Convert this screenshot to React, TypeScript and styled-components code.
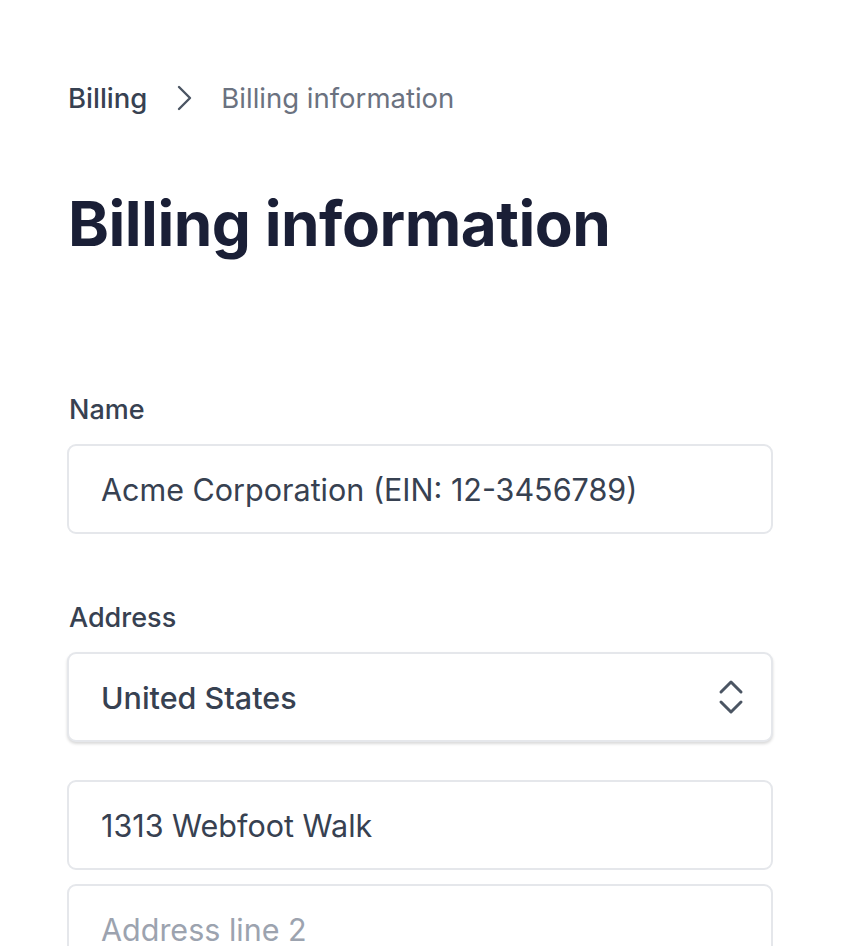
import React from "react";
import styled, { createGlobalStyle } from "styled-components";

const Global = createGlobalStyle`
  html, body { margin: 0; padding: 0; background: #ffffff; }
  body { font-family: Inter, "Noto Sans", sans-serif; -webkit-font-smoothing: antialiased; }
  * { box-sizing: border-box; }
`;

const Page = styled.main`
  padding: 80px 95px 0 67px;
  display: flex;
  flex-direction: column;
`;

const Breadcrumbs = styled.nav`
  display: flex;
  align-items: center;
  gap: 29px;
  font-size: 27.5px;
  line-height: 36px;
  padding-left: 1px;
`;

const Crumb = styled.span<{ $current?: boolean }>`
  color: ${(p) => (p.$current ? "#6b7280" : "#374151")};
  font-weight: ${(p) => (p.$current ? 400 : 500)};
`;

const Chevron = styled.svg`
  width: 16px;
  height: 26px;
  color: #4b5563;
`;

const Title = styled.h1`
  margin: 68px 0 0 1px;
  font-size: 62px;
  line-height: 80px;
  font-weight: 700;
  color: #1a1f36;
  letter-spacing: -0.5px;
`;

const Form = styled.form`
  margin-top: 130px;
  display: flex;
  flex-direction: column;
`;

const Field = styled.div<{ $gap?: number }>`
  display: flex;
  flex-direction: column;
  margin-bottom: ${(p) => p.$gap ?? 0}px;
`;

const Label = styled.label`
  font-size: 27px;
  line-height: 32px;
  color: #374151;
  font-weight: 500;
  margin: 0 0 18px 2px;
`;

const Input = styled.input`
  width: 100%;
  height: 90px;
  border: 2px solid #e5e7eb;
  border-radius: 9px;
  padding: 0 32px;
  font-family: inherit;
  font-size: 30.5px;
  color: #374151;
  background: #fff;
  outline: none;
  &::placeholder { color: #9ca3af; }
`;

const InputStack = styled.div`
  display: flex;
  flex-direction: column;
  gap: 14px;
  margin-top: 38px;
`;

const SelectBox = styled.div`
  height: 90px;
  border: 2px solid #e5e7eb;
  border-radius: 9px;
  padding: 0 26px 0 32px;
  display: flex;
  align-items: center;
  justify-content: space-between;
  font-size: 30.5px;
  font-weight: 500;
  color: #374151;
  background: #fff;
  box-shadow: 0 2px 3px rgba(0, 0, 0, 0.15);
`;

const UpDown = styled.svg`
  width: 28px;
  height: 36px;
  color: #4b5563;
`;

export default function App() {
  return (
    <>
      <Global />
      <Page>
        <Breadcrumbs>
          <Crumb>Billing</Crumb>
          <Chevron viewBox="0 0 16 26" fill="none" stroke="currentColor" strokeWidth="2.4" strokeLinecap="round" strokeLinejoin="round">
            <path d="M3 2l11 11-11 11" />
          </Chevron>
          <Crumb $current>Billing information</Crumb>
        </Breadcrumbs>
        <Title>Billing information</Title>
        <Form>
          <Field $gap={68}>
            <Label>Name</Label>
            <Input defaultValue="Acme Corporation (EIN: 12-3456789)" />
          </Field>
          <Field>
            <Label>Address</Label>
            <SelectBox>
              <span>United States</span>
              <UpDown viewBox="0 0 28 36" fill="none" stroke="currentColor" strokeWidth="3" strokeLinecap="round" strokeLinejoin="round">
                <path d="M4 13l10-10 10 10" />
                <path d="M4 23l10 10 10-10" />
              </UpDown>
            </SelectBox>
            <InputStack>
              <Input defaultValue="1313 Webfoot Walk" />
              <Input placeholder="Address line 2" />
            </InputStack>
          </Field>
        </Form>
      </Page>
    </>
  );
}
